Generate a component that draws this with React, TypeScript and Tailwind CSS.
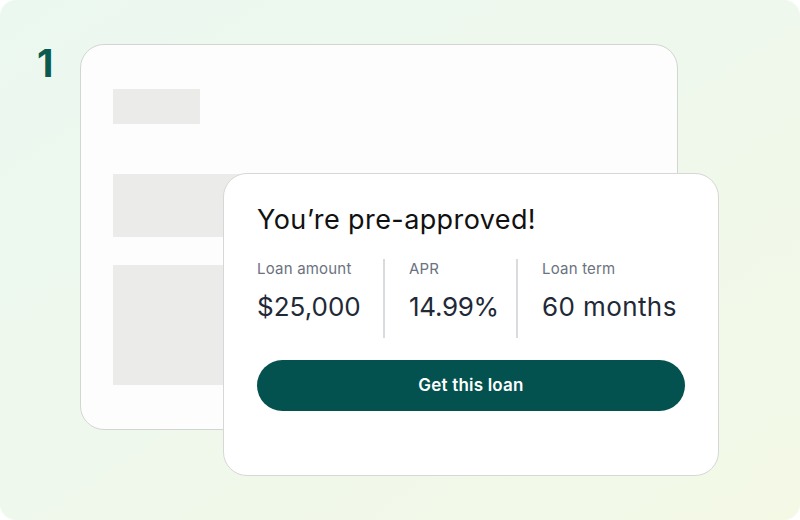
import React from "react";

export default function App() {
  const font = { fontFamily: "Inter, 'Noto Sans', sans-serif" };
  return (
    <div className="w-[800px] h-[520px] bg-white" style={font}>
      <div className="relative w-[800px] h-[520px] rounded-[16px] bg-gradient-to-br from-[#ebf8f0] via-[#eff8ec] to-[#f4f9e6] overflow-hidden">
        <div className="flex items-start">
          <div className="ml-[37px] mt-[43px] text-[38px] leading-[40px] font-bold text-[#0b5a50] w-[43px]">1</div>
          <div className="mt-[44px] w-[598px] h-[386px] rounded-[24px] border-[1.5px] border-[#d3d5d2] bg-[#fcfdfc] pl-[32px] pt-[44px] flex flex-col">
            <div className="w-[87px] h-[35px] bg-[#ebecea]" />
            <div className="mt-[50px] w-[420px] h-[63px] bg-[#ebecea]" />
            <div className="mt-[28px] w-[420px] h-[120px] bg-[#ebecea]" />
          </div>
        </div>
        <div className="absolute left-[223px] top-[173px] w-[496px] h-[303px] rounded-[24px] border-[1.5px] border-[#d6d7d6] bg-white px-[33px] pt-[30px]">
          <div className="text-[27px] leading-[32px] font-normal text-[#111111] tracking-[0.4px]">You’re pre-approved!</div>
          <div className="mt-[23px] flex h-[79px]">
            <div className="w-[128px] border-r-2 border-[#d9dbdf]">
              <div className="text-[15px] leading-[20px] text-[#6b7280] tracking-[0.2px]">Loan amount</div>
              <div className="mt-[12px] text-[26px] leading-[32px] text-[#1f2937]">$25,000</div>
            </div>
            <div className="w-[133px] pl-6 border-r-2 border-[#d9dbdf]">
              <div className="text-[15px] leading-[20px] text-[#6b7280] tracking-[0.2px]">APR</div>
              <div className="mt-[12px] text-[26px] leading-[32px] text-[#1f2937] tracking-[-0.3px]">14.99%</div>
            </div>
            <div className="pl-6">
              <div className="text-[15px] leading-[20px] text-[#6b7280] tracking-[0.2px]">Loan term</div>
              <div className="mt-[12px] text-[26px] leading-[32px] text-[#1f2937] tracking-[0.4px]">60 months</div>
            </div>
          </div>
          <button className="mt-[22px] w-full h-[51px] rounded-full bg-[#03524f] text-white text-[17px] font-semibold tracking-[0.2px] flex items-center justify-center">
            Get this loan
          </button>
        </div>
      </div>
    </div>
  );
}
